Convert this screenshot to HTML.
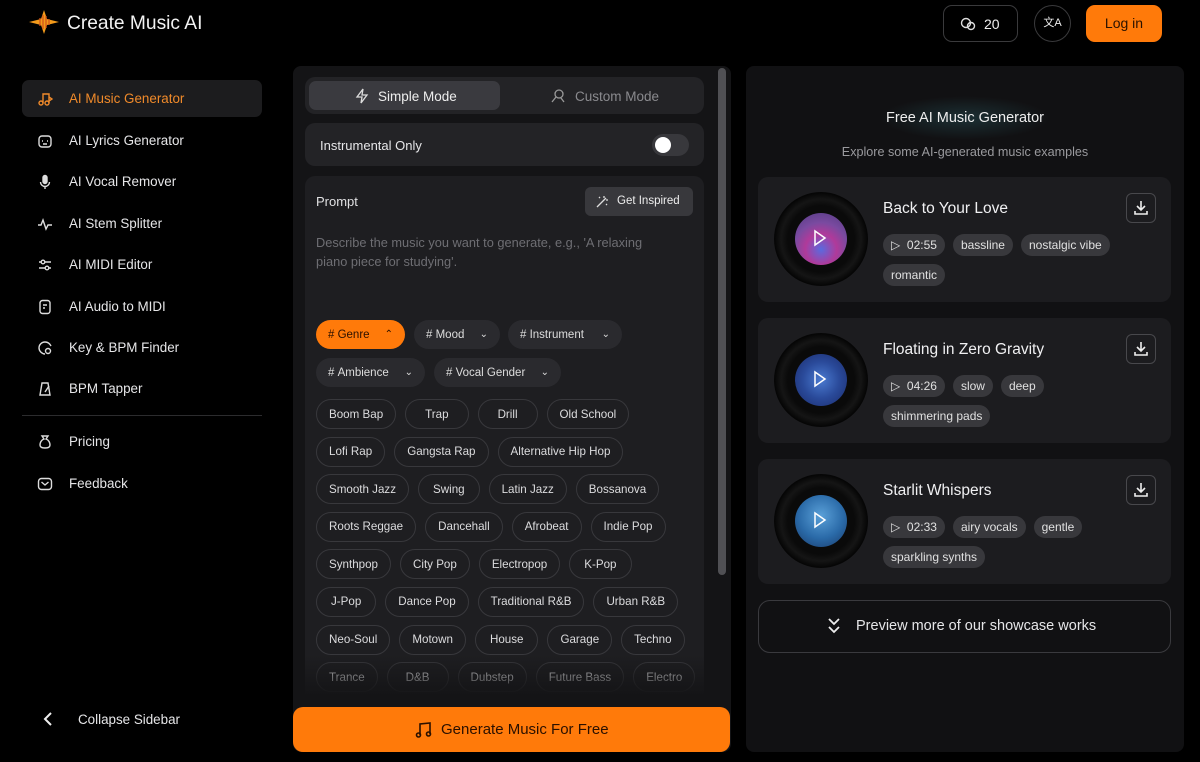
<!DOCTYPE html>
<html><head><meta charset="utf-8"><style>
*{box-sizing:border-box;margin:0;padding:0}
body{width:1200px;height:762px;background:#000;font-family:"Liberation Sans",sans-serif;color:#e8e8ea;position:relative;overflow:hidden}
.a{position:absolute}
.nav{position:absolute;left:22px;width:240px;height:37px;display:flex;align-items:center;font-size:13.4px;color:#e6e6e8}
.nav svg{position:absolute;left:15px;width:16px;height:16px}
.nav span{position:absolute;left:47px}
.chip{display:inline-flex;align-items:center;height:29px;border-radius:15px;background:#2a2a2e;font-size:11.5px;color:#ddd;padding:0 12px;position:absolute}
.chip i{font-style:normal;margin-left:auto;font-size:10px}
.tags{position:absolute;left:316px;top:399px;width:390px}
.row{display:flex;gap:9px;margin-bottom:7.6px}
.tag{height:30px;border:1px solid #38383c;border-radius:15px;padding:0 12px;font-size:11.6px;color:#dcdcde;display:flex;align-items:center;white-space:nowrap}
.card{position:absolute;left:758px;width:413px;height:125px;background:#1c1c1f;border-radius:10px}
.disc{position:absolute;left:16px;top:15px;width:94px;height:94px;border-radius:50%;background:radial-gradient(circle,#0a0a0a 50%,#151515 60%,#050505 70%,#1a1a1a 80%,#060606 92%,transparent 93%)}
.art{position:absolute;left:21px;top:21px;width:52px;height:52px;border-radius:50%}
.art svg{position:absolute;left:18px;top:16px}
.ttl{position:absolute;left:125px;top:23px;font-size:15.5px;color:#f0f0f2}
.pills{position:absolute;left:125px;top:57px;width:250px;display:flex;flex-wrap:wrap;gap:8px 8px}
.pill{height:22px;border-radius:11px;background:#38383c;font-size:12px;color:#e0e0e0;padding:0 8px;display:flex;align-items:center}
.dl{position:absolute;left:368px;top:16px;width:30px;height:30px;border:1px solid #48484c;border-radius:6px}
</style></head><body>
<svg class="a" style="left:29px;top:10px" width="30" height="24" viewBox="0 0 30 24"><path d="M0 12 L12 9 L15 0 L18 9 L30 12 L18 15 L15 24 L12 15Z" fill="#f39a1b"/><g stroke="#d4541a" stroke-width="1.3"><line x1="11" y1="8" x2="11" y2="16"/><line x1="14" y1="5" x2="14" y2="19"/><line x1="17" y1="6" x2="17" y2="18"/><line x1="20" y1="9" x2="20" y2="15"/></g></svg>
<div class="a" style="left:67px;top:13px;font-size:19.2px;color:#f2f2f2">Create Music AI</div>
<div class="a" style="left:943px;top:5px;width:75px;height:37px;border:1px solid #3a3a3c;border-radius:9px;font-size:14px;color:#eee"><svg class="a" style="left:16px;top:11px" width="16" height="14" viewBox="0 0 16 14" fill="none" stroke="#ddd" stroke-width="1.4"><circle cx="6" cy="6" r="4.5"/><circle cx="11" cy="9" r="3.5"/></svg><span class="a" style="left:40px;top:10px">20</span></div>
<div class="a" style="left:1034px;top:5px;width:37px;height:37px;border:1px solid #3a3a3c;border-radius:50%;font-size:11px;color:#eee;text-align:center;line-height:35px">文A</div>
<div class="a" style="left:1086px;top:5px;width:76px;height:37px;background:#ff7a0a;border-radius:9px;font-size:14px;color:#2a1200;text-align:center;line-height:37px">Log in</div>

<div class="nav" style="top:80px;background:#1c1c1e;border-radius:7px;color:#f08a2a"><svg viewBox="0 0 16 16" fill="none" stroke="#f08a2a" stroke-width="1.4"><circle cx="4" cy="12" r="2"/><circle cx="10" cy="12" r="2"/><path d="M6 12V3h6v9M12 6l3 2-3 2"/></svg><span>AI Music Generator</span></div>
<div class="nav" style="top:122px"><svg viewBox="0 0 16 16" fill="none" stroke="#ddd" stroke-width="1.4"><rect x="2" y="3" width="12" height="11" rx="3"/><path d="M5 8h1M10 8h1M6 11h4"/></svg><span>AI Lyrics Generator</span></div>
<div class="nav" style="top:163px"><svg viewBox="0 0 16 16" fill="none" stroke="#ddd" stroke-width="1.4"><rect x="6" y="1.5" width="4" height="8" rx="2" fill="#ddd"/><path d="M3.5 8a4.5 4.5 0 009 0M8 12.5V15"/></svg><span>AI Vocal Remover</span></div>
<div class="nav" style="top:205px"><svg viewBox="0 0 16 16" fill="none" stroke="#ddd" stroke-width="1.4"><path d="M1 9h3l2-5 3 9 2-4h4"/></svg><span>AI Stem Splitter</span></div>
<div class="nav" style="top:246px"><svg viewBox="0 0 16 16" fill="none" stroke="#ddd" stroke-width="1.4"><path d="M2 5h12M2 11h12"/><circle cx="6" cy="5" r="1.8" fill="#000"/><circle cx="10" cy="11" r="1.8" fill="#000"/></svg><span>AI MIDI Editor</span></div>
<div class="nav" style="top:288px"><svg viewBox="0 0 16 16" fill="none" stroke="#ddd" stroke-width="1.4"><rect x="3" y="1.5" width="10" height="13" rx="2.5"/><path d="M6 6h4M6 9h2"/></svg><span>AI Audio to MIDI</span></div>
<div class="nav" style="top:329px"><svg viewBox="0 0 16 16" fill="none" stroke="#ddd" stroke-width="1.4"><path d="M8 2a6 6 0 00-6 6c0 3 3 6 6 6M8 2c3 0 5 2 6 4"/><circle cx="11" cy="11" r="2.5"/></svg><span>Key &amp; BPM Finder</span></div>
<div class="nav" style="top:370px"><svg viewBox="0 0 16 16" fill="none" stroke="#ddd" stroke-width="1.4"><path d="M5 2h6l2 12H3z"/><path d="M8 11l4-6"/></svg><span>BPM Tapper</span></div>
<div class="a" style="left:22px;top:415px;width:240px;height:1px;background:#2c2c2e"></div>
<div class="nav" style="top:423px"><svg viewBox="0 0 16 16" fill="none" stroke="#ddd" stroke-width="1.4"><path d="M5 2h6l-2 3c3 1 4 4 4 6 0 2-2 3-5 3s-5-1-5-3c0-2 1-5 4-6z"/></svg><span>Pricing</span></div>
<div class="nav" style="top:465px"><svg viewBox="0 0 16 16" fill="none" stroke="#ddd" stroke-width="1.4"><rect x="1.5" y="2.5" width="13" height="11" rx="3"/><path d="M4.5 6l3.5 3 3.5-3"/></svg><span>Feedback</span></div>
<svg class="a" style="left:42px;top:712px" width="12" height="14" viewBox="0 0 12 14" fill="none" stroke="#eee" stroke-width="2"><path d="M9 1L3 7l6 6"/></svg>
<div class="a" style="left:78px;top:712px;font-size:13.4px;color:#e6e6e8">Collapse Sidebar</div>

<div class="a" style="left:293px;top:66px;width:438px;height:686px;background:#141416;border-radius:8px"></div>
<div class="a" style="left:718px;top:68px;width:8px;height:507px;background:#505054;border-radius:4px"></div>
<div class="a" style="left:305px;top:77px;width:399px;height:37px;background:#232326;border-radius:10px"></div>
<div class="a" style="left:309px;top:81px;width:191px;height:29px;background:#3a3a3f;border-radius:7px"></div>
<svg class="a" style="left:355px;top:88px" width="14" height="16" viewBox="0 0 14 16" fill="none" stroke="#ddd" stroke-width="1.3"><path d="M8 1L2 9h5l-1 6 6-8H7z"/></svg>
<div class="a" style="left:378px;top:89px;font-size:13.5px;color:#eee">Simple Mode</div>
<svg class="a" style="left:550px;top:88px" width="16" height="16" viewBox="0 0 16 16" fill="none" stroke="#999" stroke-width="1.3"><circle cx="9" cy="6" r="4"/><path d="M6 9l-4 5M11 10l3 4"/></svg>
<div class="a" style="left:575px;top:89px;font-size:13.5px;color:#8a8a8e">Custom Mode</div>
<div class="a" style="left:305px;top:123px;width:399px;height:43px;background:#232326;border-radius:10px"></div>
<div class="a" style="left:320px;top:138px;font-size:13px;color:#e6e6e8">Instrumental Only</div>
<div class="a" style="left:652px;top:134px;width:37px;height:22px;background:#38383c;border-radius:11px"></div>
<div class="a" style="left:655px;top:137px;width:16px;height:16px;background:#fff;border-radius:50%"></div>
<div class="a" style="left:305px;top:176px;width:399px;height:530px;background:#1e1e21;border-radius:10px 10px 0 0"></div>
<div class="a" style="left:316px;top:194px;font-size:13px;color:#e0e0e2">Prompt</div>
<div class="a" style="left:585px;top:187px;width:108px;height:29px;background:#38383c;border-radius:6px"></div>
<svg class="a" style="left:596px;top:194px" width="14" height="14" viewBox="0 0 14 14" fill="none" stroke="#ddd" stroke-width="1.3"><path d="M1 13L10 4M8 2v2M12 6h-2M3 3l1 1M11 11l-1-1"/></svg>
<div class="a" style="left:617px;top:195px;font-size:11.5px;color:#eee">Get Inspired</div>
<div class="a" style="left:316px;top:233px;font-size:12.8px;color:#6e6e73;line-height:19px;width:360px">Describe the music you want to generate, e.g., 'A relaxing piano piece for studying'.</div>
<div class="chip" style="left:316px;top:320px;background:#ff7a0a;color:#2a1000;width:89px">#&nbsp;Genre<i>⌃</i></div>
<div class="chip" style="left:414px;top:320px;width:86px">#&nbsp;Mood<i>⌄</i></div>
<div class="chip" style="left:508px;top:320px;width:114px">#&nbsp;Instrument<i>⌄</i></div>
<div class="chip" style="left:316px;top:358px;width:109px">#&nbsp;Ambience<i>⌄</i></div>
<div class="chip" style="left:434px;top:358px;width:127px">#&nbsp;Vocal Gender<i>⌄</i></div>
<div class="tags">
<div class="row"><div class="tag">Boom Bap</div><div class="tag" style="padding:0 19px">Trap</div><div class="tag" style="padding:0 19px">Drill</div><div class="tag">Old School</div></div>
<div class="row"><div class="tag">Lofi Rap</div><div class="tag">Gangsta Rap</div><div class="tag">Alternative Hip Hop</div></div>
<div class="row"><div class="tag">Smooth Jazz</div><div class="tag" style="padding:0 14px">Swing</div><div class="tag">Latin Jazz</div><div class="tag">Bossanova</div></div>
<div class="row"><div class="tag">Roots Reggae</div><div class="tag">Dancehall</div><div class="tag">Afrobeat</div><div class="tag">Indie Pop</div></div>
<div class="row"><div class="tag">Synthpop</div><div class="tag">City Pop</div><div class="tag">Electropop</div><div class="tag" style="padding:0 14px">K-Pop</div></div>
<div class="row"><div class="tag" style="padding:0 14px">J-Pop</div><div class="tag">Dance Pop</div><div class="tag">Traditional R&amp;B</div><div class="tag">Urban R&amp;B</div></div>
<div class="row"><div class="tag">Neo-Soul</div><div class="tag">Motown</div><div class="tag" style="padding:0 14px">House</div><div class="tag">Garage</div><div class="tag">Techno</div></div>
<div class="row"><div class="tag">Trance</div><div class="tag" style="padding:0 18px">D&amp;B</div><div class="tag">Dubstep</div><div class="tag">Future Bass</div><div class="tag">Electro</div></div>
</div>
<div class="a" style="left:305px;top:655px;width:399px;height:52px;background:linear-gradient(rgba(20,20,22,0),#141416 80%)"></div>
<div class="a" style="left:293px;top:707px;width:437px;height:45px;background:#ff7a0a;border-radius:10px"></div>
<svg class="a" style="left:415px;top:721px" width="18" height="18" viewBox="0 0 18 18" fill="none" stroke="#2a1000" stroke-width="1.6"><path d="M5 14V3l10-1v11"/><circle cx="3.5" cy="14" r="2"/><circle cx="13.5" cy="13" r="2"/></svg>
<div class="a" style="left:441px;top:721px;font-size:15px;color:#2a1000">Generate Music For Free</div>

<div class="a" style="left:746px;top:66px;width:438px;height:686px;background:#111113;border-radius:8px"></div>
<div class="a" style="left:880px;top:96px;width:170px;height:44px;background:radial-gradient(ellipse,rgba(60,140,150,.25),transparent 70%)"></div>
<div class="a" style="left:746px;top:110px;width:438px;text-align:center;font-size:14.5px;color:#eee">Free AI Music Generator</div>
<div class="a" style="left:746px;top:145px;width:438px;text-align:center;font-size:12.6px;color:#9a9a9e">Explore some AI-generated music examples</div>

<div class="card" style="top:177px"><div class="disc"><div class="art" style="background:radial-gradient(circle at 50% 70%,#5a6adf 0,#b03a9a 35%,#7a4aa0 60%,#503a80 100%)"><svg width="14" height="18" viewBox="0 0 14 18" fill="none" stroke="#fff" stroke-width="1.5"><path d="M2 2l10 7-10 7z"/></svg></div></div>
<div class="ttl">Back to Your Love</div><div class="pills"><div class="pill">▷&nbsp;&nbsp;02:55</div><div class="pill">bassline</div><div class="pill">nostalgic vibe</div><div class="pill">romantic</div></div><div class="dl"><svg width="28" height="28" viewBox="0 0 28 28" fill="none" stroke="#eee" stroke-width="1.6"><path d="M14 7v9M10 12l4 4 4-4M8 17v3h12v-3"/></svg></div></div>

<div class="card" style="top:318px"><div class="disc"><div class="art" style="background:radial-gradient(circle,#4a7ad0 0,#2a4a9a 50%,#1a2a6a 100%)"><svg width="14" height="18" viewBox="0 0 14 18" fill="none" stroke="#fff" stroke-width="1.5"><path d="M2 2l10 7-10 7z"/></svg></div></div>
<div class="ttl">Floating in Zero Gravity</div><div class="pills" style="width:170px"><div class="pill">▷&nbsp;&nbsp;04:26</div><div class="pill">slow</div><div class="pill">deep</div><div class="pill">shimmering pads</div></div><div class="dl"><svg width="28" height="28" viewBox="0 0 28 28" fill="none" stroke="#eee" stroke-width="1.6"><path d="M14 7v9M10 12l4 4 4-4M8 17v3h12v-3"/></svg></div></div>

<div class="card" style="top:459px"><div class="disc"><div class="art" style="background:radial-gradient(circle at 50% 40%,#5aa0d8 0,#2a6aa8 55%,#1a3a6a 100%)"><svg width="14" height="18" viewBox="0 0 14 18" fill="none" stroke="#fff" stroke-width="1.5"><path d="M2 2l10 7-10 7z"/></svg></div></div>
<div class="ttl">Starlit Whispers</div><div class="pills"><div class="pill">▷&nbsp;&nbsp;02:33</div><div class="pill">airy vocals</div><div class="pill">gentle</div><div class="pill">sparkling synths</div></div><div class="dl"><svg width="28" height="28" viewBox="0 0 28 28" fill="none" stroke="#eee" stroke-width="1.6"><path d="M14 7v9M10 12l4 4 4-4M8 17v3h12v-3"/></svg></div></div>

<div class="a" style="left:758px;top:600px;width:413px;height:53px;border:1px solid #3a3a3e;border-radius:12px"></div>
<svg class="a" style="left:826px;top:617px" width="16" height="18" viewBox="0 0 16 18" fill="none" stroke="#eee" stroke-width="1.8"><path d="M3 2l5 5 5-5M3 10l5 5 5-5"/></svg>
<div class="a" style="left:856px;top:618px;font-size:14.5px;color:#e6e6e8">Preview more of our showcase works</div>
</body></html>
